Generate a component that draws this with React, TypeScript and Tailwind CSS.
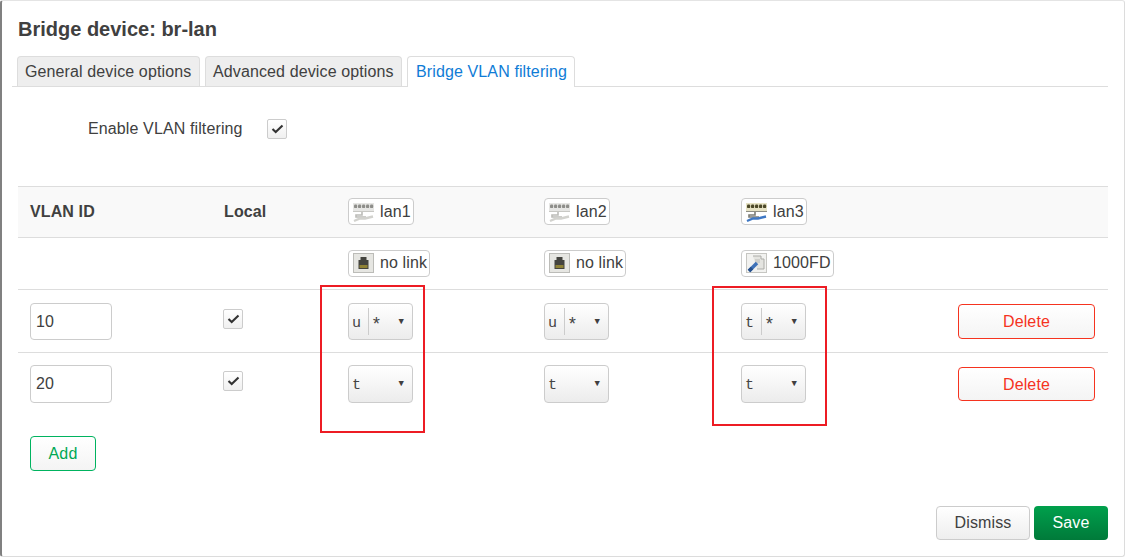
import React from "react";

// --- Port icons ---
const SwitchIcon = ({ up }: { up?: boolean }) => (
  <svg width="23" height="22" viewBox="0 0 23 22" className="block blur-[0.4px]">
    <rect x="1" y="2" width="21" height="8" fill={up ? "#e6e2c4" : "#e6e6e4"} />
    {[2, 6, 10, 14, 18].map((x) => (
      <rect key={x} x={x} y="3.5" width="3.2" height="3.6" rx="1.2" fill={up ? "#4c4828" : "#8e8e8a"} />
    ))}
    <path d="M1 10.5h21" stroke={up ? "#8e8e84" : "#c8c8c4"} strokeWidth="1" fill="none" />
    <path d="M10 11v3H4v2h10" stroke={up ? "#7c7c74" : "#bcbcb8"} strokeWidth="1.6" fill="none" />
    <path d="M2 20l6-2.5h5l8-2" stroke={up ? "#3f78c4" : "#d2d2ce"} strokeWidth="2.4" fill="none" />
  </svg>
);

const NoLinkIcon = () => (
  <svg width="23" height="22" viewBox="0 0 23 22" className="block blur-[0.3px]">
    <rect x="1.5" y="1.5" width="20" height="19" fill="#e6e6e2" stroke="#bcbcb8" />
    <path d="M8.5 5h6v3h2v9h-10V8h2z" fill="#44443f" />
    <rect x="7.5" y="13" width="8" height="3" fill="#8f8236" />
  </svg>
);

const LinkIcon = () => (
  <svg width="23" height="22" viewBox="0 0 23 22" className="block blur-[0.3px]">
    <rect x="1.5" y="1.5" width="20" height="19" fill="#f2f2f0" stroke="#c6c6c2" />
    <path d="M8 4h8v3h3v10h-7" fill="#e4e4e0" stroke="#acaca8" />
    <path d="M10 7h5v4h-5z" fill="#cfcfcb" />
    <path d="M4 19l8-8" stroke="#3f72b8" strokeWidth="3.6" />
    <path d="M4 19l3-3" stroke="#27508c" strokeWidth="3.6" />
  </svg>
);

const CheckBox = () => (
  <span className="flex h-5 w-5 items-center justify-center rounded-[2px] border border-[#ccc] bg-gradient-to-b from-white to-[#f0f0f0]">
    <svg width="13" height="10" viewBox="0 0 13 10">
      <path d="M1.5 5l3.2 3 6.8-6.5" stroke="#333" strokeWidth="2.1" fill="none" />
    </svg>
  </span>
);

const Badge = ({ icon, label }: { icon: React.ReactNode; label: string }) => (
  <span className="mt-[4px] inline-flex h-[27px] items-center gap-[5px] rounded-[4px] border border-[#ccc] bg-white pl-[3px] pr-[2px] text-[16px] text-[#404040]">
    {icon}
    {label}
  </span>
);

const PortSelect = ({ value, star, height }: { value: string; star?: boolean; height: string }) => (
  <div className={`${height} flex w-[65px] items-center rounded-[4px] border border-[#ccc] bg-gradient-to-b from-white to-[#ececec] pl-[3px] pr-2 font-['Liberation_Mono',monospace] text-[15px] text-[#444]`}>
    <span className="w-[17px] pt-[5px]">{value}</span>
    {star && <span className="-ml-[1px] h-[27px] w-[8px] border-l border-[#ccc] pl-[2px] text-[18px] leading-[35px]">*</span>}
    <span className="ml-auto pt-[1px] text-[9px] leading-none text-[#404040]">▼</span>
  </div>
);

const headGrid = "grid grid-cols-[194px_124px_196px_197px_197px_1fr] items-center";
const bodyGrid = "grid grid-cols-[194px_124px_196px_197px_197px_1fr] items-start";

const ports = [
  { name: "lan1", state: "no link", up: false },
  { name: "lan2", state: "no link", up: false },
  { name: "lan3", state: "1000FD", up: true },
];

const vlans = [
  { id: "10", pad: "pt-[13px]", height: "h-[37px]", del: "mt-[1px] h-[35px]", modes: [["u", true], ["u", true], ["t", true]] as [string, boolean][] },
  { id: "20", pad: "pt-[12px]", height: "h-[38px]", del: "mt-[2px] h-[34px] pt-[1px]", modes: [["t", false], ["t", false], ["t", false]] as [string, boolean][] },
];

export default function App() {
  return (
    <div className="h-[558px] w-[1126px] overflow-hidden bg-white font-['Liberation_Sans',Arial,sans-serif] text-[16px] tracking-[0.12px] text-[#404040]">
      <div className="relative h-[557px] w-[1125px] rounded-[3px] border-t border-r border-b border-l-2 border-t-[#e4e4e4] border-r-[#dcdcdc] border-b-[#dcdcdc] border-l-[#808080] px-[16px]">
        <h4 className="pt-[16px] text-[20px] leading-[24px] font-bold tracking-normal text-[#404040]">Bridge device: br-lan</h4>

        {/* Tabs */}
        <div className="-ml-[6px] mt-[15px] flex h-[31px] gap-[5px] border-b border-[#ddd] pl-[5px] text-[16px]">
          <div className="h-[30px] w-[183px] rounded-t-[4px] border border-b-0 border-[#ddd] bg-[#eee] pl-[7px] leading-[29px]">General device options</div>
          <div className="h-[30px] w-[197px] rounded-t-[4px] border border-b-0 border-[#ddd] bg-[#eee] pl-[7px] leading-[29px]">Advanced device options</div>
          <div className="h-[31px] w-[168px] rounded-t-[4px] border border-b-0 border-[#ddd] bg-white pl-[8px] leading-[29px] text-[#0f7cd6]">Bridge VLAN filtering</div>
        </div>

        <div className="mt-[31px] flex h-[22px] items-center pl-[70px]">
          <span className="w-[179px]">Enable VLAN filtering</span>
          <CheckBox />
        </div>

        {/* VLAN table */}
        <div className="mt-[46px] w-[1090px]">
          <div className={`${headGrid} h-[51px] border-t border-[#ddd] bg-[#f9f9f9] font-bold`}>
            <span className="pl-3">VLAN ID</span>
            <span className="pl-3">Local</span>
            {ports.map((p) => (
              <span key={p.name} className="pl-3 font-normal">
                <Badge icon={<SwitchIcon up={p.up} />} label={p.name} />
              </span>
            ))}
          </div>
          <div className={`${headGrid} h-[52px] border-t border-[#ddd]`}>
            <span />
            <span />
            {ports.map((p) => (
              <span key={p.name} className="pl-3">
                <Badge icon={p.up ? <LinkIcon /> : <NoLinkIcon />} label={p.state} />
              </span>
            ))}
            <span />
          </div>
          {vlans.map((v) => (
            <div key={v.id} className={`${bodyGrid} ${v.pad} h-[63px] border-t border-[#ddd]`}>
              <div className="pl-3">
                <div className={`${v.height} flex w-[82px] items-center rounded-[4px] border border-[#ccc] bg-white pl-[5px]`}>{v.id}</div>
              </div>
              <div className="mt-[6px] pl-[11px]">
                <CheckBox />
              </div>
              {v.modes.map(([mode, star], i) => (
                <div key={i} className="pl-3">
                  <PortSelect value={mode} star={star} height={v.height} />
                </div>
              ))}
              <div className="flex justify-end pr-[13px]">
                <button className={`${v.del} w-[137px] rounded-[4px] border border-[#f5331f] bg-gradient-to-b from-white to-[#f4f4f4] text-[#f5331f]`}>Delete</button>
              </div>
            </div>
          ))}
          <div className="pl-3 pt-[21px]">
            <button className="h-[35px] w-[66px] rounded-[4px] border border-[#00b35f] bg-gradient-to-b from-white to-[#f4f4f4] text-[#00a854]">Add</button>
          </div>
        </div>

        {/* Footer */}
        <div className="mt-[35px] flex w-[1090px] justify-end gap-[4px]">
          <button className="h-[34px] w-[94px] rounded-[4px] border border-[#ccc] bg-gradient-to-b from-white to-[#eee] text-[#404040]">Dismiss</button>
          <button className="h-[34px] w-[74px] rounded-[4px] bg-gradient-to-b from-[#00a04c] to-[#007a3a] text-white">Save</button>
        </div>
      </div>

      {/* Annotation boxes */}
      <div className="absolute left-[320px] top-[285px] h-[148px] w-[105px] border-2 border-[#ed1c24]" />
      <div className="absolute left-[712px] top-[286px] h-[140px] w-[115px] border-2 border-[#ed1c24]" />
    </div>
  );
}
